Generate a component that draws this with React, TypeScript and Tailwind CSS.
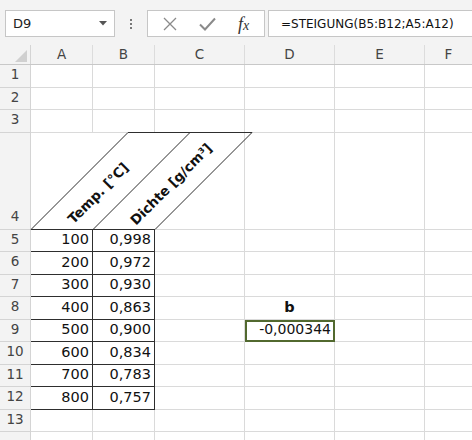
import React from 'react';

const grid = "border-r border-b border-[#dadada]";
const dark = "border-[#2e2e2e]";

const data: [string, string][] = [
  ["100", "0,998"],
  ["200", "0,972"],
  ["300", "0,930"],
  ["400", "0,863"],
  ["500", "0,900"],
  ["600", "0,834"],
  ["700", "0,783"],
  ["800", "0,757"],
];

const RowHead = ({ n }: { n?: number }) => (
  <div className="w-[31px] shrink-0 bg-[#f3f3f3] border-r border-b border-[#d4d4d4] flex items-end justify-center pb-[2px] text-[13.5px] text-[#444]">
    {n}
  </div>
);

const EmptyRow = ({ n }: { n?: number }) => (
  <div className="flex h-[22.5px]">
    <RowHead n={n} />
    <div className={`w-[62px] ${grid}`} />
    <div className={`w-[62px] ${grid}`} />
    <div className={`w-[90px] ${grid}`} />
    <div className={`w-[90px] ${grid}`} />
    <div className={`w-[90px] ${grid}`} />
    <div className="flex-1 border-b border-[#dadada]" />
  </div>
);

const App = () => {
  return (
    <div className="relative w-[472px] h-[440px] overflow-hidden bg-white font-['DejaVu_Sans',sans-serif] text-[#222]">
      {/* Formula bar */}
      <div className="h-[45px] bg-[#f3f3f3] flex items-start pt-[10px]">
        <div className="ml-[5px] w-[110px] h-[27px] bg-white border border-[#c6c6c6] flex items-center justify-between pl-[7px] pr-[7px] text-[13px]">
          <span>D9</span>
          <svg width="8" height="5" viewBox="0 0 8 5">
            <path d="M0 0 L8 0 L4 4.5 Z" fill="#555" />
          </svg>
        </div>
        <div className="w-[32px] h-[27px] flex flex-col items-center justify-center gap-[2px]">
          <span className="w-[2px] h-[2px] bg-[#777]" />
          <span className="w-[2px] h-[2px] bg-[#777]" />
          <span className="w-[2px] h-[2px] bg-[#777]" />
        </div>
        <div className="w-[118px] h-[27px] bg-white border border-[#c6c6c6] flex items-center">
          <svg width="14" height="14" viewBox="0 0 14 14" className="ml-[15px]">
            <path d="M1 1 L13 13 M13 1 L1 13" stroke="#8a8a8a" strokeWidth="1.3" />
          </svg>
          <svg width="17" height="14" viewBox="0 0 17 14" className="ml-[22px]">
            <path d="M1 7.5 L6 12.5 L16 1.5" stroke="#8a8a8a" strokeWidth="2" fill="none" />
          </svg>
          <span className="ml-[22px] font-['Liberation_Serif',serif] italic text-[18px] text-[#333] leading-none">
            f<span className="text-[14px]">x</span>
          </span>
        </div>
        <div className="ml-[3px] flex-1 h-[27px] bg-white border-y border-l border-[#c6c6c6] flex items-center pl-[12px] text-[12px] text-[#111]">
          =STEIGUNG(B5:B12;A5:A12)
        </div>
      </div>

      {/* Column headers */}
      <div className="flex h-[20px] bg-[#f3f3f3] border-b border-[#c8c8c8] text-[13.5px] text-[#444]">
        <div className="w-[31px] border-r border-[#d4d4d4] flex items-end justify-end pr-[3px] pb-[2px]">
          <svg width="12" height="12" viewBox="0 0 12 12">
            <path d="M12 0 L12 12 L0 12 Z" fill="#d0d0d0" />
          </svg>
        </div>
        {["A", "B"].map((c) => (
          <div key={c} className="w-[62px] border-r border-[#dcdcdc] flex items-center justify-center">{c}</div>
        ))}
        {["C", "D", "E"].map((c) => (
          <div key={c} className="w-[90px] border-r border-[#dcdcdc] flex items-center justify-center">{c}</div>
        ))}
        <div className="flex-1 flex items-center justify-center">F</div>
      </div>

      <EmptyRow n={1} />
      <EmptyRow n={2} />
      <EmptyRow n={3} />

      {/* row 4: slanted headers, lines drawn in overlay */}
      <div className="flex h-[97px]">
        <RowHead n={4} />
        <div className={`w-[62px] border-b ${dark}`} />
        <div className={`w-[62px] border-b ${dark}`} />
        <div className={`w-[90px] ${grid}`} />
        <div className={`w-[90px] ${grid}`} />
        <div className={`w-[90px] ${grid}`} />
        <div className="flex-1 border-b border-[#dadada]" />
      </div>

      {data.map(([a, b], i) => {
        const n = i + 5;
        return (
          <div key={n} className="flex h-[22.5px] text-[14.5px] text-[#111]">
            <RowHead n={n} />
            <div className={`w-[62px] border-r border-b ${dark} flex items-end justify-end pr-[3px]`}>{a}</div>
            <div className={`w-[62px] border-r border-b ${dark} flex items-end justify-end pr-[3px]`}>{b}</div>
            <div className={`w-[90px] ${grid}`} />
            {n === 8 ? (
              <div className={`w-[90px] ${grid} flex items-end justify-center font-bold`}>b</div>
            ) : n === 9 ? (
              <div className="w-[90px] border-2 border-[#52692f] flex items-end justify-end pr-[2px] text-[14px]">-0,000344</div>
            ) : (
              <div className={`w-[90px] ${grid}`} />
            )}
            <div className={`w-[90px] ${grid}`} />
            <div className="flex-1 border-b border-[#dadada]" />
          </div>
        );
      })}

      <EmptyRow n={13} />
      <EmptyRow />

      {/* slanted header lines */}
      <svg className="absolute left-0 top-0 pointer-events-none" width="472" height="440">
        <path
          d="M31 229.5 L128 132.5 L252 132.5 L155 229.5 M93 229.5 L190 132.5"
          stroke="#2e2e2e"
          strokeWidth="1"
          fill="none"
        />
      </svg>
      <div className="absolute left-[98px] top-[193px] -translate-x-1/2 -translate-y-1/2 -rotate-45 whitespace-nowrap font-bold text-[13.5px] text-[#111]">
        Temp. [°C]
      </div>
      <div className="absolute left-[171px] top-[184px] -translate-x-1/2 -translate-y-1/2 -rotate-45 whitespace-nowrap font-bold text-[13.5px] text-[#111]">
        Dichte [g/cm³]
      </div>
    </div>
  );
};

export default App;
